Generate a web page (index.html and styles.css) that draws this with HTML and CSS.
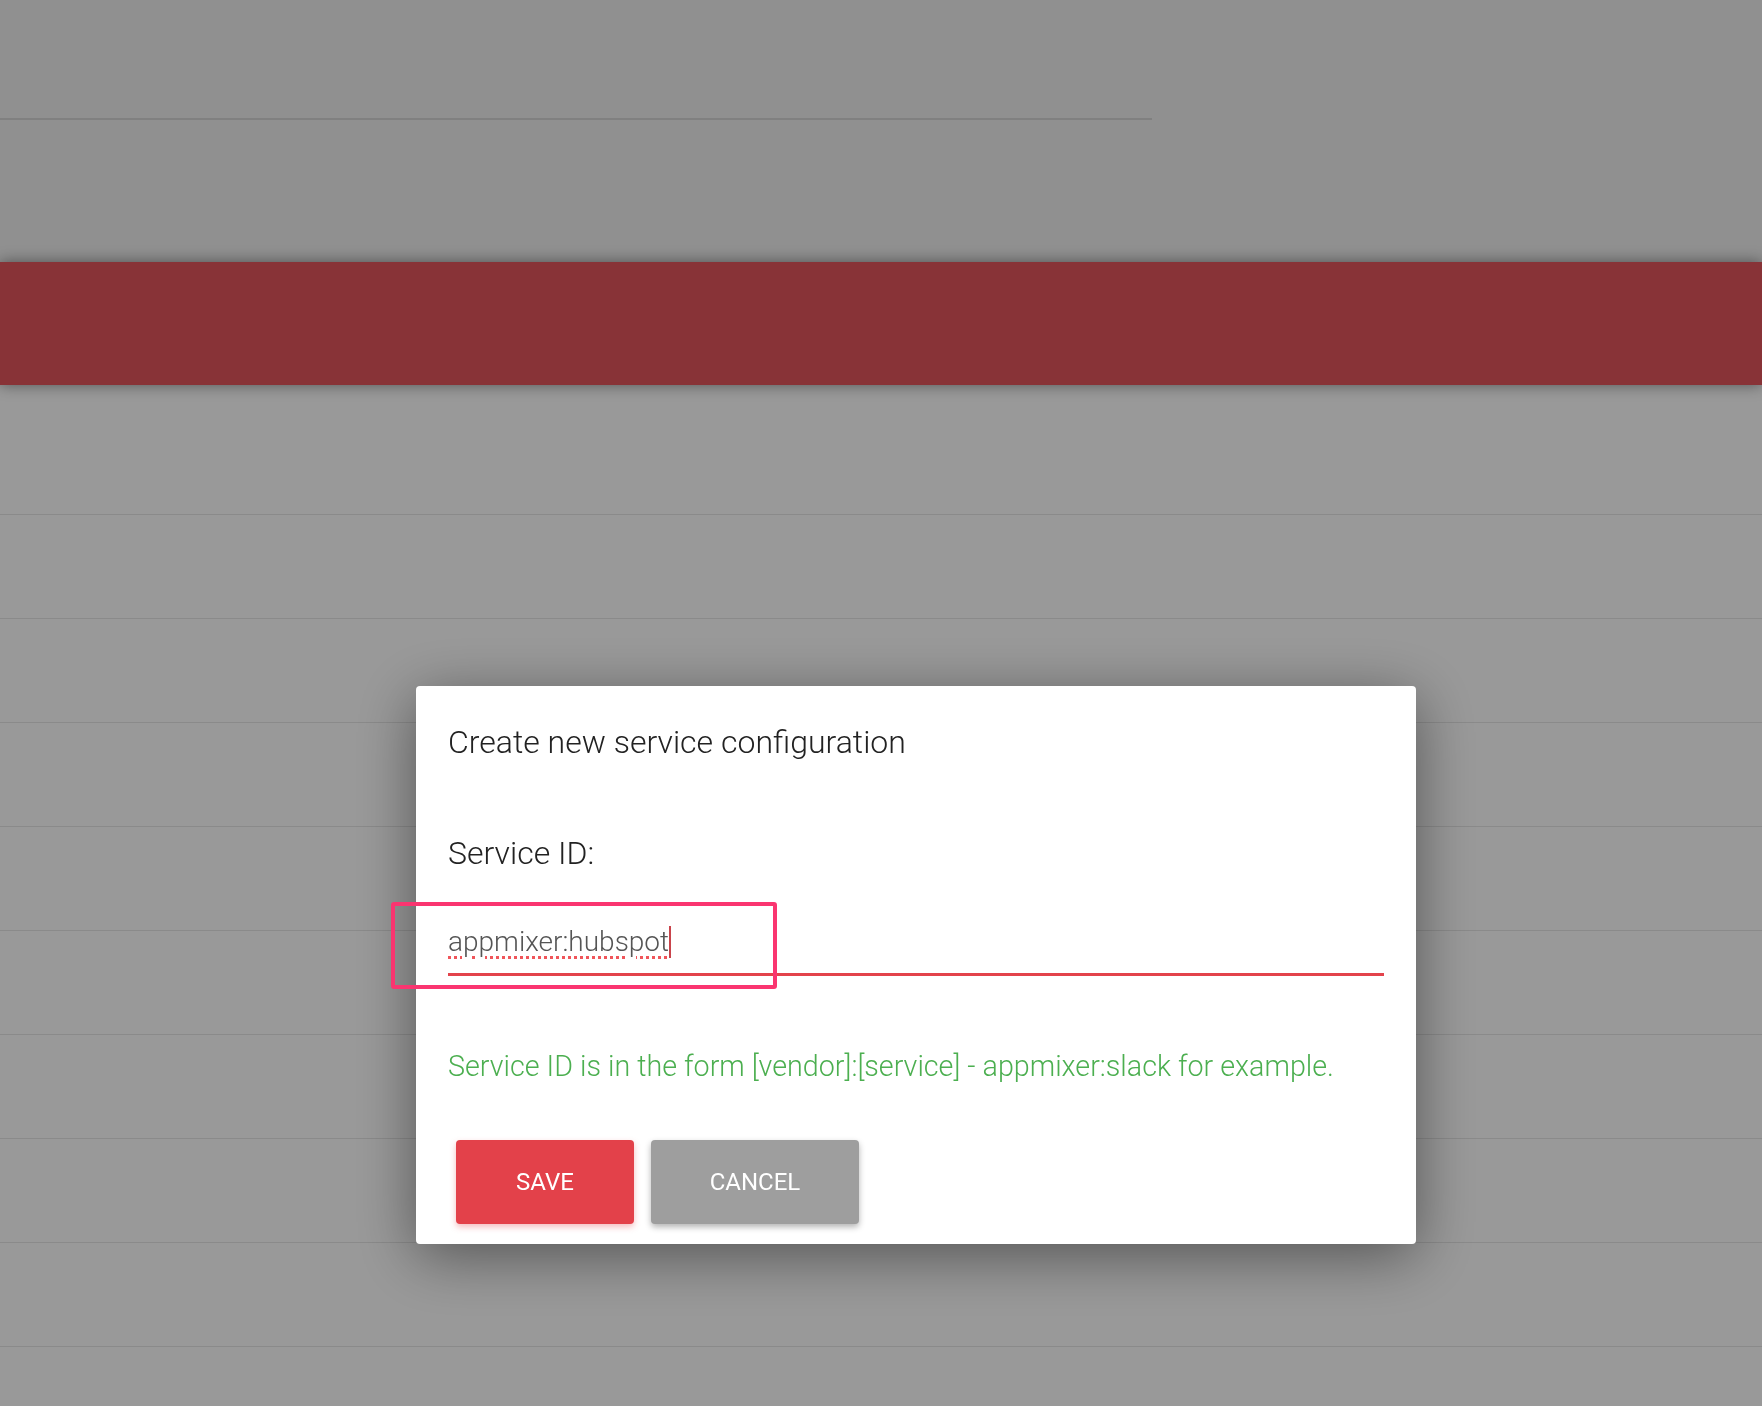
FILE: index.html
```html
<!DOCTYPE html>
<html lang="en">
<head>
    <meta charset="UTF-8">
    <meta name="viewport" content="width=device-width, initial-scale=1.0">
    <title>Service configuration</title>
    <link rel="stylesheet" href="styles.css">
</head>
<body>
    <div class="header">
        <div class="search-line"></div>
    </div>
    <div class="banner"></div>
    <div class="list">
        <div class="row"></div>
        <div class="row"></div>
        <div class="row"></div>
        <div class="row"></div>
        <div class="row"></div>
        <div class="row"></div>
        <div class="row"></div>
        <div class="row"></div>
        <div class="row"></div>
        <div class="row"></div>
    </div>

    <div class="backdrop">
        <div class="dialog">
            <h2 class="dialog-title">Create new service configuration</h2>
            <div class="field-label">Service ID:</div>
            <div class="field">
                <span class="field-value">appmixer:hubspot</span><span class="caret"></span>
            </div>
            <div class="helper">Service ID is in the form [vendor]:[service] - appmixer:slack for example.</div>
            <div class="actions">
                <button class="btn btn-save">Save</button>
                <button class="btn btn-cancel">Cancel</button>
            </div>
            <div class="highlight"></div>
        </div>
    </div>
</body>
</html>
```

FILE: styles.css
```css
body {
    margin: 0;
    font-family: Roboto, "Liberation Sans", Arial, sans-serif;
    background-color: #fff;
    overflow: hidden;
}
.header {
    height: 262px;
    padding-top: 118px;
    box-sizing: border-box;
    background-color: #f0f0f0;
}
.search-line {
    width: 1152px;
    height: 2px;
    background-color: #d5d5d5;
}
.banner {
    height: 123px;
    background-color: #e3555d;
    box-shadow: 0 0 14px rgba(0,0,0,0.45);
    position: relative;
}
.list {
    padding-top: 26px;
}
.row {
    height: 103px;
    border-bottom: 1px solid #e6e6e6;
}
.backdrop {
    position: fixed;
    inset: 0;
    background-color: rgba(0,0,0,0.4);
    padding: 686px 0 0 416px;
}
.dialog {
    position: relative;
    width: 1000px;
    box-sizing: border-box;
    padding: 38px 32px 20px;
    background-color: #fff;
    border-radius: 4px;
    box-shadow: 0 12px 60px rgba(0,0,0,0.45);
}
.dialog-title {
    margin: 0;
    font-size: 32px;
    font-weight: 300;
    line-height: 36px;
    color: #222;
}
.field-label {
    margin-top: 75px;
    font-size: 32px;
    font-weight: 300;
    line-height: 36px;
    color: #222;
}
.field {
    margin-top: 55px;
    padding-bottom: 15px;
    border-bottom: 3px solid #e3434b;
    font-size: 28px;
    font-weight: 300;
    line-height: 32px;
    color: #555;
}
.field-value {
    text-decoration: underline dotted #f0555a;
    text-decoration-thickness: 3px;
    text-underline-offset: 5px;
}
.caret {
    display: inline-block;
    width: 2px;
    height: 32px;
    vertical-align: top;
    background-color: #c9444b;
}
.helper {
    margin-top: 74px;
    font-size: 28.7px;
    font-weight: 300;
    line-height: 33px;
    color: #4caf50;
}
.actions {
    display: flex;
    gap: 17px;
    margin-top: 57px;
    padding-left: 8px;
}
.btn {
    height: 84px;
    border: none;
    border-radius: 4px;
    color: #fff;
    font-family: inherit;
    font-size: 24px;
    text-transform: uppercase;
    cursor: pointer;
}
.btn-save {
    width: 178px;
    background-color: #e3414a;
    box-shadow: 0 3px 6px rgba(227,65,74,0.35);
}
.btn-cancel {
    width: 208px;
    background-color: #9e9e9e;
    box-shadow: 0 3px 6px rgba(0,0,0,0.3);
}
.highlight {
    position: absolute;
    left: -25px;
    top: 216px;
    width: 386px;
    height: 87px;
    box-sizing: border-box;
    border: 4px solid #fa3570;
    border-radius: 3px;
}
```
